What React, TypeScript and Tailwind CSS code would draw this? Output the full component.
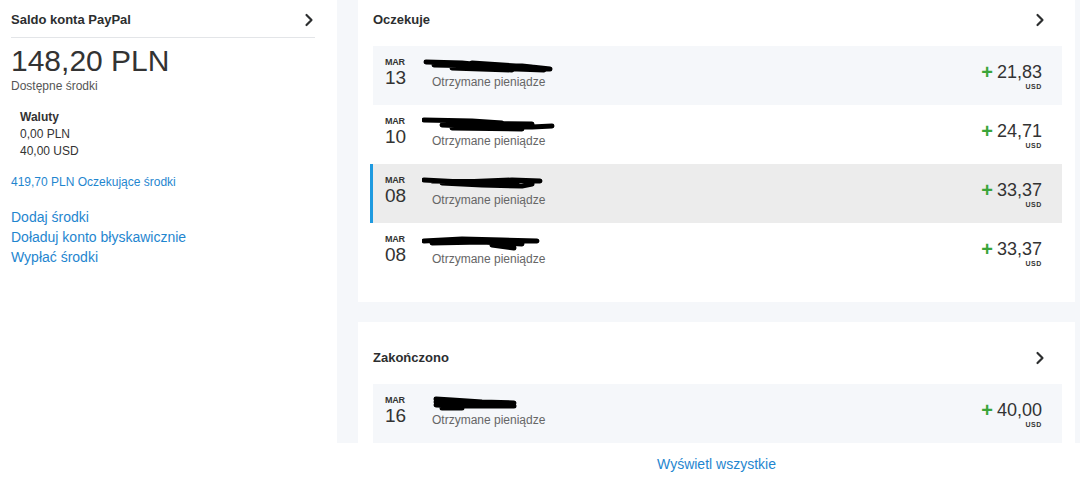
import { ChevronRight } from "lucide-react";

type Tx = {
  month: string;
  day: string;
  amount: string;
  bg: string;
  selected?: boolean;
  scribble: string;
};

const pending: Tx[] = [
  {
    month: "MAR",
    day: "13",
    amount: "21,83",
    bg: "bg-[#f5f7fa]",
    scribble: "M4 4 L40 5 L70 8 L100 8 L128 11 M12 7 L60 8 L95 11 L122 12 M30 10 L90 12 M50 5 L110 9",
  },
  {
    month: "MAR",
    day: "10",
    amount: "24,71",
    bg: "bg-white",
    scribble: "M2 3 L50 4 L80 6 L60 7 L20 8 L70 10 L110 10 L130 9 M40 6 L110 7 M30 11 L100 12",
  },
  {
    month: "MAR",
    day: "08",
    amount: "33,37",
    bg: "bg-[#ececec]",
    selected: true,
    scribble: "M2 4 L40 6 L90 4 L118 5 M20 7 L60 9 L100 10 L110 8 M50 8 L95 7 M10 5 L70 6",
  },
  {
    month: "MAR",
    day: "08",
    amount: "33,37",
    bg: "bg-white",
    scribble: "M2 6 L40 4 L80 5 L115 6 M10 8 L60 7 L100 9 M70 10 L92 13 M30 6 L90 7",
  },
];

const done: Tx[] = [
  {
    month: "MAR",
    day: "16",
    amount: "40,00",
    bg: "bg-[#f5f7fa]",
    scribble: "M14 3 L30 4 L60 6 L92 7 M14 9 L40 10 L70 10 L92 10 M14 6 L60 7 M20 12 L40 12",
  },
];

function Row({ tx }: { tx: Tx }) {
  return (
    <div
      className={`flex h-[59px] items-start pr-[20px] ${tx.bg} ${
        tx.selected ? "-ml-[3px] border-l-[3px] border-[#1e9ae0] pl-[12px]" : "pl-[12px]"
      }`}
    >
      <div className="w-[47px] pt-[11px] text-[#333]">
        <div className="text-[9px] font-bold leading-[11px] tracking-[-0.2px]">{tx.month}</div>
        <div className="text-[19px] leading-[20px]">{tx.day}</div>
      </div>
      <div className="flex-1 pt-[12px]">
        <div className="-ml-[10px] h-[17px]">
          <svg width="136" height="17" viewBox="0 0 136 17">
            <path
              d={tx.scribble}
              stroke="#000"
              strokeWidth="5"
              fill="none"
              strokeLinecap="round"
              strokeLinejoin="round"
            />
          </svg>
        </div>
        <div className="text-[12px] leading-[14px] text-[#666]">Otrzymane pieniądze</div>
      </div>
      <div className="flex flex-col items-end pt-[16px]">
        <div className="flex items-center leading-[20px]">
          <span className="mr-[4px] text-[20px] font-bold text-[#3aa53a]">+</span>
          <span className="text-[18px] text-[#333]">{tx.amount}</span>
        </div>
        <div className="text-[7px] font-bold leading-[9px] tracking-[0.6px] text-[#333]">USD</div>
      </div>
    </div>
  );
}

function CardHeader({ title }: { title: string }) {
  return (
    <div className="flex items-center justify-between pr-[12px]">
      <h2 className="text-[13px] font-bold text-[#2c2e2f]">{title}</h2>
      <ChevronRight size={20} strokeWidth={2.6} className="text-[#2c2e2f]" />
    </div>
  );
}

export default function App() {
  return (
    <div
      className="flex h-[479px] w-[1080px] overflow-hidden bg-white text-[#333]"
      style={{ fontFamily: '"Liberation Sans", Arial, sans-serif' }}
    >
      {/* Balance panel */}
      <div className="w-[337px] shrink-0 pl-[11px] pr-[22px]">
        <div className="flex h-[38px] items-center justify-between border-b border-[#e3e5e8] pt-[2px]">
          <h2 className="text-[13px] font-bold text-[#2c2e2f]">Saldo konta PayPal</h2>
          <ChevronRight size={20} strokeWidth={2.6} className="-mr-[4px] text-[#2c2e2f]" />
        </div>
        <div className="mt-[6px] text-[30px] leading-[34px] text-[#333]">148,20 PLN</div>
        <div className="mt-[1px] text-[12px] leading-[14px] text-[#555]">Dostępne środki</div>
        <div className="mt-[16px] pl-[9px] text-[12px] leading-[17px] text-[#333]">
          <div className="font-bold">Waluty</div>
          <div>0,00 PLN</div>
          <div>40,00 USD</div>
        </div>
        <div className="mt-[15px] text-[12px] leading-[14px] text-[#1f86cf]">419,70 PLN Oczekujące środki</div>
        <div className="mt-[18px] flex flex-col text-[14px] leading-[20px] text-[#1f86cf]">
          <span>Dodaj środki</span>
          <span>Doładuj konto błyskawicznie</span>
          <span>Wypłać środki</span>
        </div>
      </div>

      {/* Activity */}
      <div className="flex flex-1 flex-col">
        <div className="flex h-[443px] flex-col bg-[#f5f7fa] pl-[21px] pr-[5px]">
          <div className="h-[302px] bg-white pl-[15px] pr-[13px]">
            <div className="flex h-[46px] items-center pb-[6px]">
              <div className="flex-1">
                <CardHeader title="Oczekuje" />
              </div>
            </div>
            {pending.map((tx, i) => (
              <Row key={i} tx={tx} />
            ))}
          </div>
          <div className="mt-[20px] flex-1 bg-white pl-[15px] pr-[13px]">
            <div className="flex h-[62px] items-center pt-[10px]">
              <div className="flex-1">
                <CardHeader title="Zakończono" />
              </div>
            </div>
            {done.map((tx, i) => (
              <Row key={i} tx={tx} />
            ))}
          </div>
        </div>
        <div className="flex flex-1 justify-center pl-[21px] pr-[5px] pt-[12px]">
          <span className="text-[14px] leading-[18px] text-[#1f86cf]">Wyświetl wszystkie</span>
        </div>
      </div>
    </div>
  );
}
